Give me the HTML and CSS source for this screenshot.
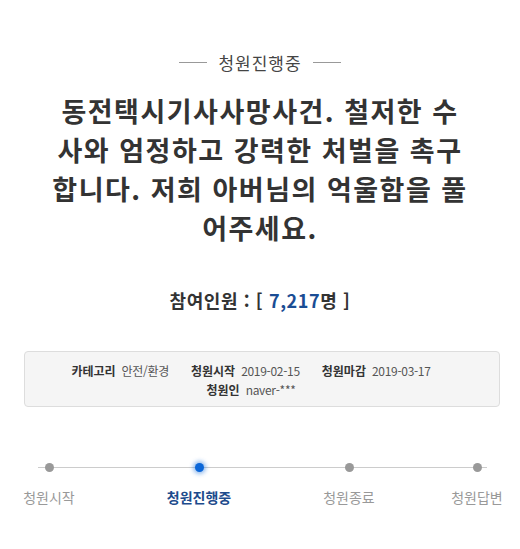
FILE: index.html
```html
<!DOCTYPE html>
<html lang="ko">
<head>
  <meta charset="UTF-8" />
  <meta name="viewport" content="width=device-width, initial-scale=1.0"/>
  <title>청원진행중</title>
  <link rel="stylesheet" href="styles.css">
</head>
<body>
  <div class="petition">
    <div class="status">
      <span class="status-line"></span>
      <span class="status-text">청원진행중</span>
      <span class="status-line"></span>
    </div>

    <h1 class="title">동전택시기사사망사건. 철저한 수사와 엄정하고 강력한 처벌을 촉구합니다. 저희 아버님의 억울함을 풀어주세요.</h1>

    <div class="count">참여인원 : [ <span class="count-num">7,217</span>명 ]</div>

    <div class="info">
      <div class="info-item"><b>카테고리</b><span>안전/환경</span></div>
      <div class="info-item"><b>청원시작</b><span>2019-02-15</span></div>
      <div class="info-item"><b>청원마감</b><span>2019-03-17</span></div>
      <div class="info-item"><b>청원인</b><span>naver-***</span></div>
    </div>

    <div class="progress">
      <div class="step">
        <span class="dot"></span>
        <span class="label">청원시작</span>
      </div>
      <div class="step active">
        <span class="dot"></span>
        <span class="label">청원진행중</span>
      </div>
      <div class="step">
        <span class="dot"></span>
        <span class="label">청원종료</span>
      </div>
      <div class="step last">
        <span class="dot"></span>
        <span class="label">청원답변</span>
      </div>
    </div>
  </div>
</body>
</html>
```

FILE: styles.css
```css
body {
  margin: 0;
  font-family: "Noto Sans CJK KR", "Noto Sans", sans-serif;
  background-color: #fff;
  color: #333;
}
.petition {
  width: 520px;
}
.status {
  display: flex;
  justify-content: center;
  align-items: center;
  gap: 11px;
  margin-top: 50px;
  height: 24px;
}
.status-line {
  width: 28px;
  height: 1px;
  background-color: #999;
}
.status-text {
  font-size: 17px;
  letter-spacing: 1px;
  color: #444;
}
.title {
  width: 420px;
  margin: 17px auto 0;
  font-size: 27px;
  line-height: 39px;
  letter-spacing: 1.5px;
  font-weight: bold;
  text-align: center;
  word-break: break-all;
  color: #333;
}
.count {
  margin-top: 40px;
  font-size: 18px;
  line-height: 26px;
  letter-spacing: 0.6px;
  font-weight: bold;
  text-align: center;
  color: #333;
}
.count-num {
  color: #1a4d94;
}
.info {
  display: flex;
  flex-wrap: wrap;
  justify-content: center;
  margin: 38px 20px 0 24px;
  padding: 9px 10px;
  height: 36px;
  background-color: #f5f5f5;
  border: 1px solid #ddd;
  border-radius: 4px;
}
.info-item {
  display: flex;
  gap: 6px;
  margin-right: 22px;
  font-size: 12px;
  line-height: 19px;
  color: #555;
}
.info-item span {
  letter-spacing: -0.3px;
}
.info-item b {
  color: #333;
}
.progress {
  position: relative;
  display: flex;
  margin-top: 56px;
  padding: 0 13px 0 19px;
}
.progress::before {
  content: "";
  position: absolute;
  top: 4px;
  left: 38px;
  right: 33px;
  height: 1px;
  background-color: #ccc;
}
.step {
  position: relative;
  display: flex;
  flex-direction: column;
  align-items: center;
  flex-shrink: 0;
  width: 60px;
}
.step + .step {
  margin-left: 90px;
}
.step.last {
  margin-left: auto;
}
.dot {
  width: 9px;
  height: 9px;
  border-radius: 50%;
  background-color: #999;
}
.label {
  margin-top: 15px;
  white-space: nowrap;
  font-size: 14px;
  line-height: 20px;
  color: #999;
}
.step.active .dot {
  background-color: #0b66d8;
  box-shadow: 0 0 4px 2px rgba(11, 102, 216, 0.45);
}
.step.active .label {
  font-weight: bold;
  color: #1d4b8c;
}
```
